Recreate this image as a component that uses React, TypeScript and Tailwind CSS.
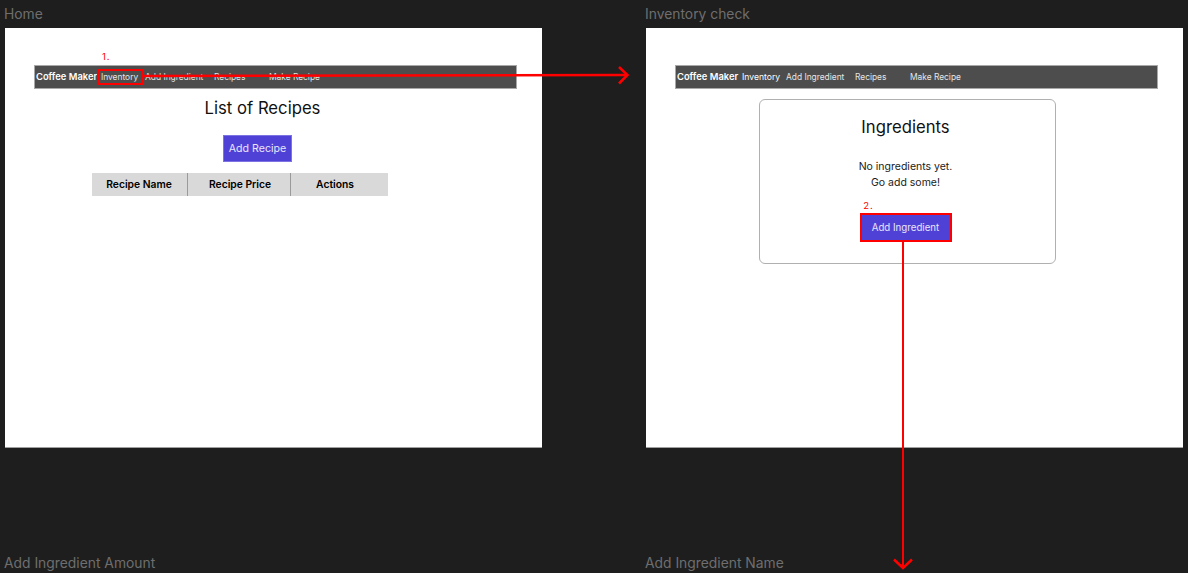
const font = { fontFamily: 'Inter, "Liberation Sans", sans-serif' };

const NavBar = ({ active }: { active?: boolean }) => (
  <div className="h-[24px] w-[483px] bg-[#4d4d4d] border border-[#a8a8a8] flex items-center pl-[1px] whitespace-nowrap text-[8.4px] text-[#e6e6e6]">
    <span className="w-[65px] text-[9.4px] font-semibold text-white">Coffee Maker</span>
    <span className={active ? 'w-[44px] text-[8.6px] text-white' : 'w-[44px]'}>Inventory</span>
    <span className="w-[69px]">Add Ingredient</span>
    <span className="w-[55px]">Recipes</span>
    <span>Make Recipe</span>
  </div>
);

const FrameLabel = ({ text }: { text: string }) => (
  <div className="h-[17px] text-[13.85px] leading-[17px] text-[#6e6e6e] whitespace-nowrap">{text}</div>
);

const HomeFrame = () => (
  <div className="mt-[5px] ml-[1px] w-[537px] h-[420px] bg-white border-b border-[#a0a0a0] pt-[37px] pl-[29px]">
    <NavBar />
    <div className="w-[483px] pr-[26px] flex flex-col items-center">
      <h1 className="mt-[7px] h-[24px] text-[16.7px] leading-[24px] text-[#111111]">List of Recipes</h1>
      <button className="mt-[15px] mr-[10px] w-[69px] h-[27px] bg-[#5041d6] border border-[#7d72e2] text-[10.6px] text-[#e9e6fb]">Add Recipe</button>
      <div className="mt-[11px] mr-[46px] w-[296px] h-[23px] bg-[#d9d9d9] flex text-[10.3px] font-semibold text-black">
        <div className="w-[96px] flex items-center justify-center border-r border-[#9a9a9a]">Recipe Name</div>
        <div className="w-[103px] pl-[3px] flex items-center justify-center border-r border-[#9a9a9a]">Recipe Price</div>
        <div className="flex-1 pr-[8px] flex items-center justify-center">Actions</div>
      </div>
    </div>
  </div>
);

const InventoryFrame = () => (
  <div className="mt-[5px] ml-[1px] w-[537px] h-[420px] bg-white border-b border-[#a0a0a0] pt-[37px] pl-[29px]">
    <NavBar active />
    <div className="mt-[10px] ml-[84px] w-[297px] h-[165px] border border-[#b0b0b0] rounded-[6px] pr-[4px] flex flex-col items-center">
      <h2 className="mt-[15px] text-[16.7px] leading-[24px] text-[#111111]">Ingredients</h2>
      <p className="mt-[20px] text-[10.5px] leading-[16px] text-[#1a1a1a] text-center">
        No ingredients yet.
        <br />
        Go add some!
      </p>
      <span className="mt-[8px] mr-[74px] h-[13px] text-[9.5px] leading-[13px] tracking-[1px] text-[#ff0000]">2.</span>
      <button className="mt-[1px] w-[92px] h-[29px] pt-[1px] bg-[#5041d6] border-2 border-[#ff0000] text-[9.7px] text-[#e9e6fb]">Add Ingredient</button>
    </div>
  </div>
);

const Annotations = () => (
  <svg className="absolute left-0 top-0" width="1188" height="573" fill="none">
    <rect x="98" y="70" width="44" height="14" stroke="#ff0000" strokeWidth="2" />
    <path d="M143 76 L627 75" stroke="#ff0000" strokeWidth="2.5" />
    <path d="M619 67 L627.5 75 L619 83.5" stroke="#ff0000" strokeWidth="2.5" />
    <path d="M903 241 L903 568" stroke="#ff0000" strokeWidth="2" />
    <path d="M894 559.5 L903 568 L912 559.5" stroke="#ff0000" strokeWidth="2.5" />
  </svg>
);

const App = () => {
  return (
    <div className="relative w-[1188px] h-[573px] bg-[#1e1e1e] overflow-hidden flex pl-[4px] pt-[6px]" style={font}>
      <div className="w-[641px] flex flex-col">
        <FrameLabel text="Home" />
        <HomeFrame />
        <div className="mt-[107px]">
          <FrameLabel text="Add Ingredient Amount" />
        </div>
      </div>
      <div className="flex flex-col">
        <FrameLabel text="Inventory check" />
        <InventoryFrame />
        <div className="mt-[107px]">
          <FrameLabel text="Add Ingredient Name" />
        </div>
      </div>
      <Annotations />
      <div className="absolute left-[102px] top-[50px] text-[9.5px] leading-[13px] tracking-[1px] text-[#ff0000]">1.</div>
    </div>
  );
};

export default App;
